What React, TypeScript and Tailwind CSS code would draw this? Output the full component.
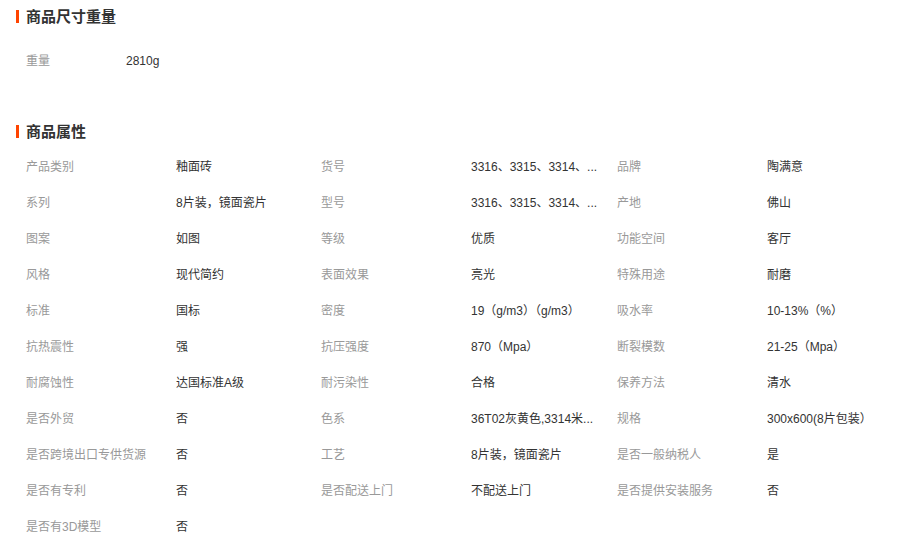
const font = { fontFamily: '"Liberation Sans", "Noto Sans CJK SC", sans-serif' };

type Pair = [string, string];

const sizeRows: Pair[] = [['重量', '2810g']];

const attrRows: Pair[][] = [
  [['产品类别', '釉面砖'], ['货号', '3316、3315、3314、...'], ['品牌', '陶满意']],
  [['系列', '8片装，镜面瓷片'], ['型号', '3316、3315、3314、...'], ['产地', '佛山']],
  [['图案', '如图'], ['等级', '优质'], ['功能空间', '客厅']],
  [['风格', '现代简约'], ['表面效果', '亮光'], ['特殊用途', '耐磨']],
  [['标准', '国标'], ['密度', '19（g/m3）（g/m3）'], ['吸水率', '10-13%（%）']],
  [['抗热震性', '强'], ['抗压强度', '870（Mpa）'], ['断裂模数', '21-25（Mpa）']],
  [['耐腐蚀性', '达国标准A级'], ['耐污染性', '合格'], ['保养方法', '清水']],
  [['是否外贸', '否'], ['色系', '36T02灰黄色,3314米...'], ['规格', '300x600(8片包装）']],
  [['是否跨境出口专供货源', '否'], ['工艺', '8片装，镜面瓷片'], ['是否一般纳税人', '是']],
  [['是否有专利', '否'], ['是否配送上门', '不配送上门'], ['是否提供安装服务', '否']],
  [['是否有3D模型', '否']],
];

function SectionTitle({ text, className = '' }: { text: string; className?: string }) {
  return (
    <div className={`flex items-center h-8 pl-4 ${className}`}>
      <span className="w-[3px] h-[13px] bg-[#ff4400]" />
      <h3 className="ml-[7px] text-[15px] font-bold text-[#333] leading-none">{text}</h3>
    </div>
  );
}

function Cell({ label, value, labelW = 'w-[150px]' }: { label: string; value: string; labelW?: string }) {
  return (
    <div className="flex items-center h-9 text-xs">
      <span className={`${labelW} shrink-0 text-[#999] whitespace-nowrap`}>{label}</span>
      <span className="w-[140px] text-[#333] whitespace-nowrap">{value}</span>
    </div>
  );
}

export default function App() {
  return (
    <div className="w-[898px] h-[548px] bg-white overflow-hidden" style={font}>
      <SectionTitle text="商品尺寸重量" />

      {/* size & weight */}
      <div className="pl-[26px] mt-[11px]">
        {sizeRows.map(([l, v]) => (
          <Cell key={l} label={l} value={v} labelW="w-[100px]" />
        ))}
      </div>

      <SectionTitle text="商品属性" className="mt-[36px]" />

      {/* attributes */}
      <div className="pl-[26px] mt-[2px]">
        {attrRows.map((row, i) => (
          <div key={i} className="grid grid-cols-[295px_296px_250px]">
            {row.map(([l, v]) => (
              <Cell key={l} label={l} value={v} />
            ))}
          </div>
        ))}
      </div>
    </div>
  );
}
